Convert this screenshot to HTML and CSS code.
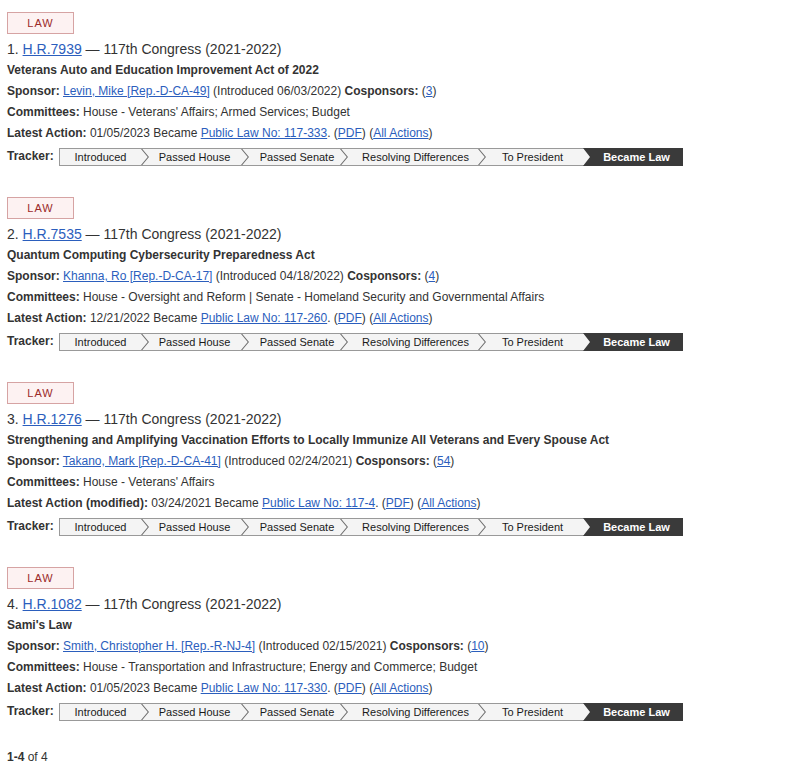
FILE: index.html
```html
<!DOCTYPE html>
<html>
<head>
    <link rel="stylesheet" href="styles.css">
</head>
<body>

    <ol class="results">
        <li class="result">
            <span class="badge">LAW</span>
            <div class="heading">1. <a href="#">H.R.7939</a> — 117th Congress (2021-2022)</div>
            <div class="title">Veterans Auto and Education Improvement Act of 2022</div>
            <div class="row"><b>Sponsor:</b> <a href="#">Levin, Mike [Rep.-D-CA-49]</a> (Introduced 06/03/2022) <b>Cosponsors:</b> (<a href="#">3</a>)</div>
            <div class="row"><b>Committees:</b> House - Veterans' Affairs; Armed Services; Budget</div>
            <div class="row"><b>Latest Action:</b> 01/05/2023 Became <a href="#">Public Law No: 117-333</a>. (<a href="#">PDF</a>) (<a href="#">All Actions</a>)</div>
            <div class="tracker-row">
                <b>Tracker:</b>
                <div class="tracker">
                    <span class="step">Introduced</span><span class="step">Passed House</span><span class="step">Passed Senate</span><span class="step">Resolving Differences</span><span class="step">To President</span><span class="step current">Became Law</span>
                </div>
            </div>
        </li>
        <li class="result">
            <span class="badge">LAW</span>
            <div class="heading">2. <a href="#">H.R.7535</a> — 117th Congress (2021-2022)</div>
            <div class="title">Quantum Computing Cybersecurity Preparedness Act</div>
            <div class="row"><b>Sponsor:</b> <a href="#">Khanna, Ro [Rep.-D-CA-17]</a> (Introduced 04/18/2022) <b>Cosponsors:</b> (<a href="#">4</a>)</div>
            <div class="row"><b>Committees:</b> House - Oversight and Reform | Senate - Homeland Security and Governmental Affairs</div>
            <div class="row"><b>Latest Action:</b> 12/21/2022 Became <a href="#">Public Law No: 117-260</a>. (<a href="#">PDF</a>) (<a href="#">All Actions</a>)</div>
            <div class="tracker-row">
                <b>Tracker:</b>
                <div class="tracker">
                    <span class="step">Introduced</span><span class="step">Passed House</span><span class="step">Passed Senate</span><span class="step">Resolving Differences</span><span class="step">To President</span><span class="step current">Became Law</span>
                </div>
            </div>
        </li>
        <li class="result">
            <span class="badge">LAW</span>
            <div class="heading">3. <a href="#">H.R.1276</a> — 117th Congress (2021-2022)</div>
            <div class="title">Strengthening and Amplifying Vaccination Efforts to Locally Immunize All Veterans and Every Spouse Act</div>
            <div class="row"><b>Sponsor:</b> <a href="#">Takano, Mark [Rep.-D-CA-41]</a> (Introduced 02/24/2021) <b>Cosponsors:</b> (<a href="#">54</a>)</div>
            <div class="row"><b>Committees:</b> House - Veterans' Affairs</div>
            <div class="row"><b>Latest Action (modified):</b> 03/24/2021 Became <a href="#">Public Law No: 117-4</a>. (<a href="#">PDF</a>) (<a href="#">All Actions</a>)</div>
            <div class="tracker-row">
                <b>Tracker:</b>
                <div class="tracker">
                    <span class="step">Introduced</span><span class="step">Passed House</span><span class="step">Passed Senate</span><span class="step">Resolving Differences</span><span class="step">To President</span><span class="step current">Became Law</span>
                </div>
            </div>
        </li>
        <li class="result">
            <span class="badge">LAW</span>
            <div class="heading">4. <a href="#">H.R.1082</a> — 117th Congress (2021-2022)</div>
            <div class="title">Sami's Law</div>
            <div class="row"><b>Sponsor:</b> <a href="#">Smith, Christopher H. [Rep.-R-NJ-4]</a> (Introduced 02/15/2021) <b>Cosponsors:</b> (<a href="#">10</a>)</div>
            <div class="row"><b>Committees:</b> House - Transportation and Infrastructure; Energy and Commerce; Budget</div>
            <div class="row"><b>Latest Action:</b> 01/05/2023 Became <a href="#">Public Law No: 117-330</a>. (<a href="#">PDF</a>) (<a href="#">All Actions</a>)</div>
            <div class="tracker-row">
                <b>Tracker:</b>
                <div class="tracker">
                    <span class="step">Introduced</span><span class="step">Passed House</span><span class="step">Passed Senate</span><span class="step">Resolving Differences</span><span class="step">To President</span><span class="step current">Became Law</span>
                </div>
            </div>
        </li>
    </ol>

    <div class="pagination"><b>1-4</b> of 4</div>

</body>
</html>
```

FILE: styles.css
```css
body {
    font-family: "Liberation Sans", Arial, sans-serif;
    font-size: 12px;
    color: #333;
    background-color: #fff;
    margin: 0;
    padding: 12px 7px 0;
}

a {
    color: #2b5ebd;
    text-decoration: underline;
}

.results {
    list-style: none;
    margin: 0;
    padding: 0;
}

.result {
    margin-bottom: 31px;
}

.result:last-child {
    margin-bottom: 26px;
}

.badge {
    display: block;
    width: 67px;
    height: 22px;
    box-sizing: border-box;
    border: 1px solid #d6a3a3;
    background-color: #fdf2f2;
    color: #9b2a2a;
    font-size: 11px;
    line-height: 20px;
    letter-spacing: 1px;
    text-align: center;
}

.heading {
    margin-top: 4px;
    font-size: 14px;
    line-height: 22px;
}

.title {
    font-weight: bold;
    line-height: 21px;
}

.row {
    line-height: 21px;
}

.tracker-row {
    display: flex;
    align-items: flex-start;
    margin-top: 4px;
    line-height: 16px;
}

.tracker-row b {
    width: 52px;
}

.tracker {
    display: flex;
    height: 16px;
    border: 1px solid #999;
    background-color: #f4f4f4;
    font-size: 11px;
    color: #1a1a1a;
}

.step {
    position: relative;
    box-sizing: border-box;
    padding-left: 7px;
    line-height: 16px;
    text-align: center;
    white-space: nowrap;
}

.step:nth-child(1) { width: 81px; padding-left: 0; }
.step:nth-child(2) { width: 100px; }
.step:nth-child(3) { width: 99px; padding-left: 13px; }
.step:nth-child(4) { width: 138px; padding-left: 13px; }
.step:nth-child(5) { width: 105px; padding-left: 4px; }
.step:nth-child(6) { width: 100px; }

/* chevron between steps */
.step + .step::before {
    content: "";
    position: absolute;
    left: 0;
    top: 0;
    width: 8px;
    height: 16px;
    background-color: #6f6f6f;
    clip-path: polygon(0 0, 1.3px 0, 8px 50%, 1.3px 100%, 0 100%, 6.7px 50%);
}

.step.current {
    background-color: #3a3a3a;
    color: #fff;
    font-weight: bold;
    margin: -1px -1px -1px 0;
    padding-top: 1px;
    clip-path: polygon(0 0, 100% 0, 100% 100%, 0 100%, 7px 50%);
}

.step.current::before {
    display: none;
}

.pagination {
    line-height: 20px;
}
```
